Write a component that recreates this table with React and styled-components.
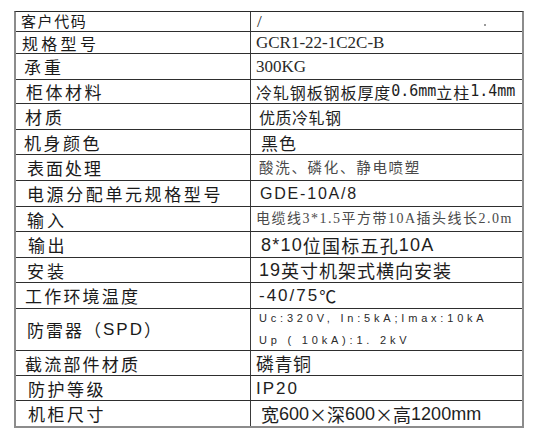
import React from "react";
import styled, { createGlobalStyle } from "styled-components";

const GlobalStyle = createGlobalStyle`
  * { box-sizing: border-box; }
  body {
    margin: 0;
    background: #fff;
    font-family: "Noto Sans CJK SC", "Liberation Sans", sans-serif;
    color: #1e1e1e;
  }
`;

const Table = styled.div`
  width: 510px;
  margin: 11px 0 0 14px;
  border-top: 1px solid #2a2a2a;
  border-left: 2px solid #8c8c8c;
  border-right: 2px solid #8c8c8c;
  border-bottom: 2px solid #8c8c8c;
`;

const Row = styled.div`
  display: grid;
  grid-template-columns: 235px 1fr;
  height: ${(p) => p.$h}px;
  border-bottom: ${(p) => (p.$last ? "none" : "1px solid #2e2e2e")};
`;

const Label = styled.div`
  display: flex;
  align-items: center;
  padding-left: ${(p) => p.$pl ?? 10}px;
  padding-top: ${(p) => p.$pt ?? 0}px;
  padding-bottom: ${(p) => p.$pb ?? 0}px;
  border-right: 1px solid #3a3a3a;
  font-size: ${(p) => p.$fs ?? 17}px;
  letter-spacing: ${(p) => p.$ls ?? 2.5}px;
  line-height: 1;
  white-space: nowrap;
  color: #1a1a1a;
`;

const Value = styled.div`
  position: relative;
  display: flex;
  align-items: center;
  padding-left: ${(p) => p.$pl ?? 6}px;
  font-family: ${(p) =>
    p.$serif
      ? '"Liberation Serif", "Noto Sans CJK SC", serif'
      : '"Noto Sans CJK SC", "Liberation Sans", sans-serif'};
  font-size: ${(p) => p.$fs ?? 17}px;
  letter-spacing: ${(p) => p.$ls ?? 0}px;
  color: ${(p) => p.$color ?? "#1e1e1e"};
  line-height: 1;
  white-space: nowrap;
`;

const Latin = styled.span`
  font-family: "Liberation Sans", sans-serif;
`;

const Mono = styled.span`
  font-family: "DejaVu Sans Mono", monospace;
  font-size: 15px;
  letter-spacing: 0;
`;

const SpdBox = styled.div`
  display: flex;
  flex-direction: column;
  justify-content: center;
  gap: 11px;
  padding-left: 8px;
  font-family: "Liberation Sans", sans-serif;
  font-size: 11px;
  letter-spacing: 3.8px;
  line-height: 1;
  color: #2a2a2a;
  white-space: nowrap;
`;

const Speck = styled.span`
  position: absolute;
  left: 233px;
  top: 12px;
  width: 2px;
  height: 2px;
  background: #9a9a9a;
`;

const App = () => {
  return (
    <>
      <GlobalStyle />
      <Table>
        <Row $h={20}>
          <Label $pl={5} $fs={15} $ls={1.6} $pb={2}>客户代码</Label>
          <Value $serif $fs={17} $pl={6}>
            /
            <Speck />
          </Value>
        </Row>
        <Row $h={22}>
          <Label $pl={6} $fs={16} $ls={3.3} $pt={1}>规格型号</Label>
          <Value $serif $fs={17} $pl={5} $color="#2a2a2a">GCR1-22-1C2C-B</Value>
        </Row>
        <Row $h={26}>
          <Label $pl={8} $ls={3}>承重</Label>
          <Value $serif $fs={17} $pl={5} $color="#2a2a2a">300KG</Value>
        </Row>
        <Row $h={24}>
          <Label $pl={10}>柜体材料</Label>
          <Value $fs={16} $ls={0.9} $pl={5}>
            冷轧钢板钢板厚度<Mono>0.6mm</Mono>立柱<Mono>1.4mm</Mono>
          </Value>
        </Row>
        <Row $h={26}>
          <Label $pl={9} $ls={3}>材质</Label>
          <Value $fs={16} $ls={0.5} $pl={8}>优质冷轧钢</Value>
        </Row>
        <Row $h={25}>
          <Label $pl={8}>机身颜色</Label>
          <Value $fs={17} $ls={1} $pl={10}>黑色</Value>
        </Row>
        <Row $h={26}>
          <Label $pl={11} $ls={2}>表面处理</Label>
          <Value $fs={14.5} $ls={1.7} $pl={8} $color="#4a4a4a">酸洗、磷化、静电喷塑</Value>
        </Row>
        <Row $h={26}>
          <Label $pl={11} $ls={2.6}>电源分配单元规格型号</Label>
          <Value $pl={9} $ls={1.8} $fs={16}>
            <Latin>GDE-10A/8</Latin>
          </Value>
        </Row>
        <Row $h={25}>
          <Label $pl={11} $ls={3}>输入</Label>
          <Value $serif $fs={14} $ls={1.5} $pl={5} $color="#4a4a4a">
            电缆线3*1.5平方带10A插头线长2.0m
          </Value>
        </Row>
        <Row $h={26}>
          <Label $pl={12} $ls={2.5}>输出</Label>
          <Value $fs={18} $ls={1.2} $pl={10}>
            <Latin>8*10</Latin>位国标五孔<Latin>10A</Latin>
          </Value>
        </Row>
        <Row $h={25}>
          <Label $pl={11} $ls={3}>安装</Label>
          <Value $fs={18} $ls={1} $pl={8}>
            <Latin>19</Latin>英寸机架式横向安装
          </Value>
        </Row>
        <Row $h={26}>
          <Label $pl={9} $ls={2.2}>工作环境温度</Label>
          <Value $fs={17} $ls={2} $pl={8}>
            <Latin>-40/75</Latin>℃
          </Value>
        </Row>
        <Row $h={42}>
          <Label $pl={11} $ls={2}>防雷器（<Latin>SPD</Latin>）</Label>
          <SpdBox>
            <span>Uc:320V, In:5kA;Imax:10kA</span>
            <span>Up ( 10kA):1. 2kV</span>
          </SpdBox>
        </Row>
        <Row $h={25}>
          <Label $pl={9} $ls={2.2}>截流部件材质</Label>
          <Value $fs={18} $ls={0.5} $pl={5}>磷青铜</Value>
        </Row>
        <Row $h={25}>
          <Label $pl={12} $ls={2.5}>防护等级</Label>
          <Value $fs={17} $ls={2} $pl={5}>
            <Latin>IP20</Latin>
          </Value>
        </Row>
        <Row $h={25} $last>
          <Label $pl={12} $ls={2.5}>机柜尺寸</Label>
          <Value $fs={18} $pl={10}>
            宽<Latin>600</Latin>×深<Latin>600</Latin>×高<Latin>1200mm</Latin>
          </Value>
        </Row>
      </Table>
    </>
  );
};

export default App;
